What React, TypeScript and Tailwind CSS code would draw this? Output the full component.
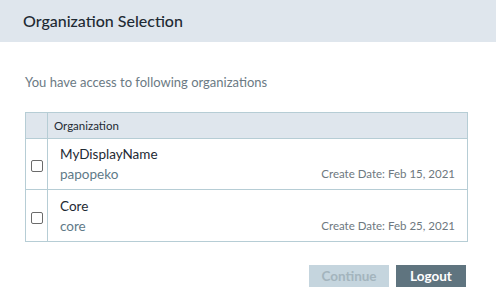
export default function App() {
  const orgs = [
    { name: "MyDisplayName", id: "papopeko", date: "Feb 15, 2021" },
    { name: "Core", id: "core", date: "Feb 25, 2021" },
  ]
  return (
    <div className="w-[496px] h-[304px] bg-white font-['Lato',sans-serif] text-[#1e2a33] overflow-hidden">
      <div className="h-[42px] bg-[#dfe6ed] flex items-center px-[23px]">
        <h1 className="text-[16px] leading-none font-medium">Organization Selection</h1>
      </div>
      <div className="px-[25px]">
        <p className="mt-[31px] text-[13px] leading-[18px] text-[#6b7a84]">You have access to following organizations</p>
        <div className="mt-[21px] w-[443px] border border-[#b6cdd5]">
          <div className="flex h-[26px] bg-[#dfe6ed] border-b border-[#b6cdd5]">
            <div className="w-[22px] border-r border-[#b6cdd5]" />
            <div className="flex items-center px-[6px] text-[11.5px]">Organization</div>
          </div>
          {orgs.map((o, i) => (
            <div key={i} className={`flex h-[51px] ${i === 0 ? "border-b border-[#b6cdd5]" : ""}`}>
              <div className="w-[22px] border-r border-[#b6cdd5] flex items-center justify-center pt-[4px]">
                <div className="w-[12px] h-[12px] border border-[#6b6b6b] rounded-[2px] bg-white" />
              </div>
              <div className="flex-1 flex justify-between items-end px-[12px] pb-[5px]">
                <div className="flex flex-col">
                  <span className="text-[13.5px] leading-[20px]">{o.name}</span>
                  <span className="text-[13.5px] leading-[20px] text-[#5f7a88]">{o.id}</span>
                </div>
                <span className="text-[11.5px] leading-[20px] text-[#6e7880]">Create Date: {o.date}</span>
              </div>
            </div>
          ))}
        </div>
        <div className="mt-[23px] w-[441px] flex justify-end gap-[7px]">
          <button className="w-[80px] h-[22px] bg-[#c5d5de] text-[#a3b4bd] text-[13.5px] font-bold">Continue</button>
          <button className="w-[70px] h-[22px] bg-[#5f747f] text-white text-[13.5px] font-bold">Logout</button>
        </div>
      </div>
    </div>
  )
}
